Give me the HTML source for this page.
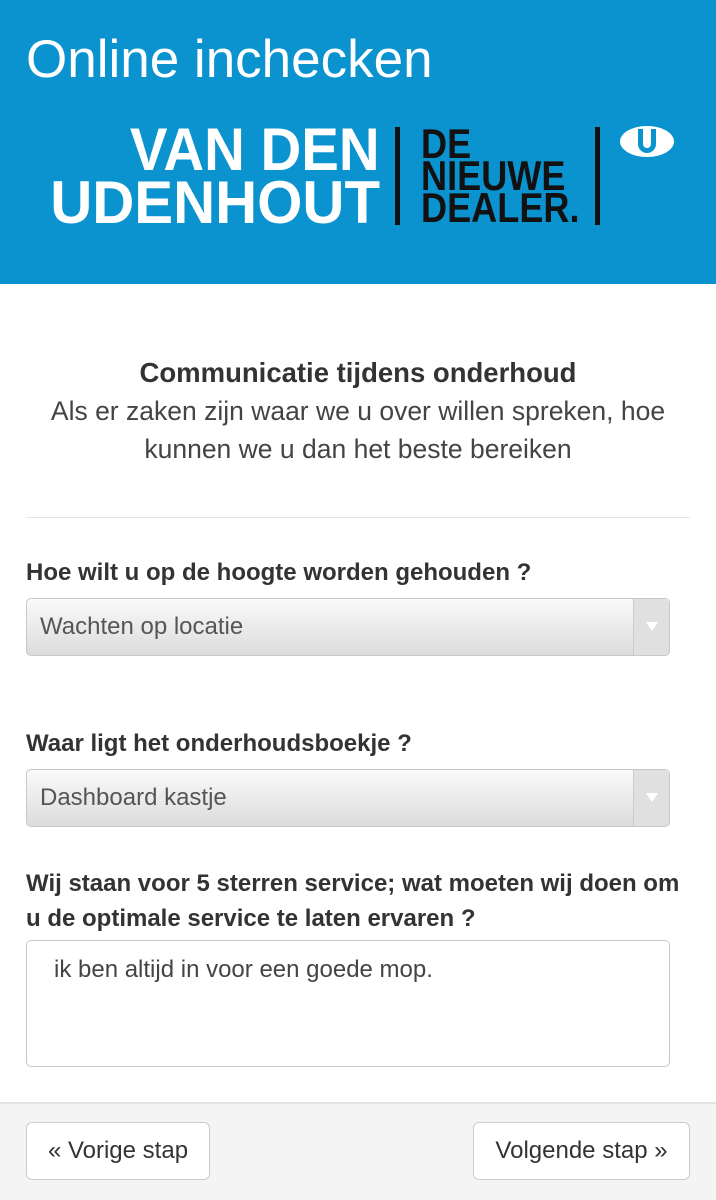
<!DOCTYPE html>
<html><head><meta charset="utf-8"><style>
*{box-sizing:border-box;margin:0;padding:0}
body{width:716px;height:1200px;overflow:hidden;background:#fff;font-family:"Liberation Sans",sans-serif;position:relative;color:#333}
.hdr{position:absolute;left:0;top:0;width:716px;height:284px;background:#0a93cf}
.title{position:absolute;left:26px;top:30px;font-size:53px;color:#fff;line-height:60px}
.lg{position:absolute;font-weight:bold;white-space:nowrap;transform-origin:right top}
.w{color:#fff;font-size:60px;line-height:60px}
.b{color:#111;font-size:42px;line-height:42px;transform-origin:left top}
.bar{position:absolute;width:5px;background:#111;top:127px;height:98px}
.abs{position:absolute}
.c{position:absolute;left:0;width:716px;text-align:center}
.lab{position:absolute;left:26px;font-weight:bold;font-size:24px;color:#333}
.sel{position:absolute;left:26px;width:644px;height:58px;border:1px solid #c8c8c8;border-radius:5px;background:linear-gradient(#fafafa,#dcdcdc);font-size:24px;color:#555;padding-left:13px;line-height:56px}
.sel .ar{position:absolute;right:0;top:0;width:36px;height:56px;border-left:1px solid #ccc;background:#e0e0e0;border-radius:0 5px 5px 0}
.sel .ar:after{content:"";position:absolute;left:12px;top:23px;border-left:6px solid transparent;border-right:6px solid transparent;border-top:9px solid #fff}
.btn{position:absolute;top:1122px;height:58px;border:1px solid #ccc;border-radius:6px;background:#fff;font-size:24px;color:#333;line-height:56px;text-align:center}
</style></head><body>
<div class="hdr">
<div class="title">Online inchecken</div>
<div class="lg w" style="right:336px;top:120px;transform:scaleX(0.94)">VAN DEN</div>
<div class="lg w" style="right:336px;top:173px;transform:scaleX(0.97)">UDENHOUT</div>
<div class="bar" style="left:395px"></div>
<div class="lg b" style="left:421px;top:123px;transform:scaleX(0.86)">DE</div>
<div class="lg b" style="left:421px;top:155px;transform:scaleX(0.86)">NIEUWE</div>
<div class="lg b" style="left:421px;top:187px;transform:scaleX(0.86)">DEALER.</div>
<div class="bar" style="left:595px"></div>
<div class="abs" style="left:620px;top:126px;width:54px;height:31px;border-radius:50%;background:#fff"></div>
<div class="abs" style="left:638px;top:129px;width:18px;height:24px;border:5px solid #0a93cf;border-top:none;border-radius:0 0 9px 9px"></div>
</div>
<div class="c" style="top:357px;font-weight:bold;font-size:27.5px;color:#333">Communicatie tijdens onderhoud</div>
<div class="c" style="top:392px;font-size:26.5px;line-height:38px;color:#444">Als er zaken zijn waar we u over willen spreken, hoe<br>kunnen we u dan het beste bereiken</div>
<div class="abs" style="left:26px;top:517px;width:664px;height:1px;background:#e4e4e4"></div>
<div class="lab" style="top:559px">Hoe wilt u op de hoogte worden gehouden ?</div>
<div class="sel" style="top:598px">Wachten op locatie<div class="ar"></div></div>
<div class="lab" style="top:730px">Waar ligt het onderhoudsboekje ?</div>
<div class="sel" style="top:769px">Dashboard kastje<div class="ar"></div></div>
<div class="lab" style="top:866px;line-height:35px">Wij staan voor 5 sterren service; wat moeten wij doen om<br>u de optimale service te laten ervaren ?</div>
<div class="abs" style="left:26px;top:940px;width:644px;height:127px;border:1px solid #c8c8c8;border-radius:5px;font-size:24px;color:#444;padding:15px 0 0 27px">ik ben altijd in voor een goede mop.</div>
<div class="abs" style="left:0;top:1102px;width:716px;height:98px;background:#f4f4f4;border-top:2px solid #e2e2e2"></div>
<div class="btn" style="left:26px;width:184px">« Vorige stap</div>
<div class="btn" style="left:473px;width:217px">Volgende stap »</div>
</body></html>
